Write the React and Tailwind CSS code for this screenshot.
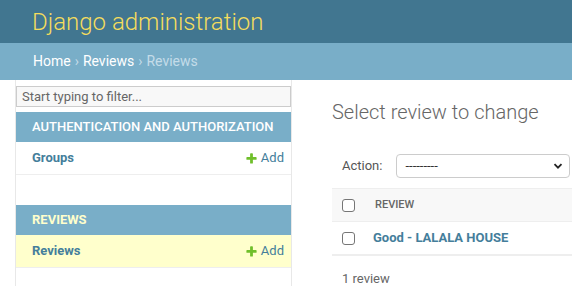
import React from 'react';

const font = { fontFamily: 'Roboto, "Liberation Sans", sans-serif' };

const AddIcon = () => (
  <svg width="13" height="13" viewBox="0 0 1792 1792" className="shrink-0">
    <path
      fill="#70bf2b"
      d="M1600 796v192q0 40-28 68t-68 28h-416v416q0 40-28 68t-68 28h-192q-40 0-68-28t-28-68v-416h-416q-40 0-68-28t-28-68v-192q0-40 28-68t68-28h416v-416q0-40 28-68t68-28h192q40 0 68 28t28 68v416h416q40 0 68 28t28 68z"
    />
  </svg>
);

const ModelRow = ({ name, current }) => (
  <div
    className={`flex items-center justify-between h-[33px] pl-[16px] pr-[7px] border-b border-[#eeeeee] text-[13px] ${
      current ? 'bg-[#ffffcc]' : 'bg-white'
    }`}
  >
    <a href="#" className="font-bold text-[#447e9b]">{name}</a>
    <a href="#" className="flex items-center gap-[3px] text-[#447e9b]">
      <AddIcon />
      Add
    </a>
  </div>
);

const Checkbox = () => (
  <span className="block w-[13px] h-[13px] border border-[#767676] rounded-[3px] bg-white" />
);

export default function App() {
  return (
    <div className="w-[572px] h-[286px] overflow-hidden bg-white" style={font}>
      {/* header */}
      <div className="h-[43px] bg-[#417690] flex items-center pl-[32px]">
        <h1 className="text-[24px] font-light text-[#f5dd5d] leading-none">Django administration</h1>
      </div>

      {/* breadcrumbs */}
      <div className="h-[37px] bg-[#79aec8] flex items-center pl-[33px] text-[14px] text-[#c4dce8]">
        <a href="#" className="text-white">Home</a>
        <span className="mx-[4px]">›</span>
        <a href="#" className="text-white">Reviews</a>
        <span className="mx-[4px]">›</span>
        <span>Reviews</span>
      </div>

      <div className="flex h-[206px]">
        <div className="w-[16px] shrink-0 border-r border-[#e8e8e8]" />

        {/* sidebar */}
        <nav className="w-[276px] shrink-0 border-r border-[#e8e8e8]">
          <input
            type="text"
            placeholder="Start typing to filter..."
            className="block w-[275px] h-[21px] mt-[6px] mb-[5px] px-[5px] text-[13px] border border-[#cccccc] bg-[#f8f8f8] placeholder:text-[#666666] outline-none"
          />

          <div className="mb-[30px]">
            <div className="h-[30px] bg-[#79aec8] flex items-center pl-[16px] text-[13px] font-medium text-white">
              AUTHENTICATION AND AUTHORIZATION
            </div>
            <ModelRow name="Groups" />
          </div>

          <div>
            <div className="h-[30px] bg-[#79aec8] flex items-center pl-[16px] text-[13px] font-bold text-[#ffffcc]">
              REVIEWS
            </div>
            <ModelRow name="Reviews" current />
          </div>
        </nav>

        {/* content */}
        <main className="flex-1 min-w-0 pl-[40px] pt-[20px]">
          <h1 className="text-[20px] font-light text-[#666666] leading-[24px] mb-[20px]">
            Select review to change
          </h1>

          <div className="flex items-center p-[10px] text-[13px] text-[#555555]">
            <label className="mr-[14px]">Action:</label>
            <div className="flex items-center justify-between w-[174px] h-[24px] border border-[#cccccc] rounded-[4px] pl-[8px] pr-[6px] text-[#333333] shrink-0">
              <span className="text-[13px]">---------</span>
              <svg width="10" height="10" viewBox="0 0 10 10">
                <path d="M1.5 3.2 L5 6.7 L8.5 3.2" fill="none" stroke="#222" strokeWidth="1.8" />
              </svg>
            </div>
          </div>

          <div className="w-[260px]">
            <div className="flex items-center h-[34px] bg-[#f8f8f8] border-t border-b border-[#eeeeee]">
              <div className="pl-[10px] w-[43px]">
                <Checkbox />
              </div>
              <span className="text-[11px] font-medium text-[#666666]">REVIEW</span>
            </div>
            <div className="flex items-center h-[34px] border-b-2 border-[#eeeeee]">
              <div className="pl-[10px] w-[41px]">
                <Checkbox />
              </div>
              <a href="#" className="text-[13px] font-bold text-[#447e9b]">Good - LALALA HOUSE</a>
            </div>
            <div className="pl-[10px] pt-[12px] text-[13px] text-[#666666] leading-[22px]">1 review</div>
          </div>
        </main>
      </div>
    </div>
  );
}
